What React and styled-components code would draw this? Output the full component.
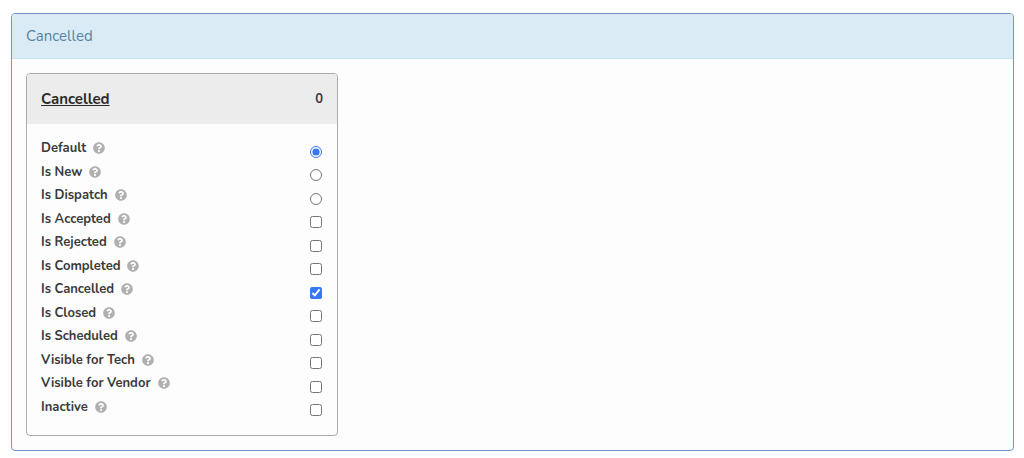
import React, { useState } from 'react';
import styled, { createGlobalStyle } from 'styled-components';
import { FaQuestionCircle } from 'react-icons/fa';

const GlobalStyle = createGlobalStyle`
  * {
    box-sizing: border-box;
  }

  body {
    margin: 0;
    background: #fff;
    color: #3a3a3a;
    font-family: Nunito, Lato, sans-serif;
    font-size: 13px;
  }
`;

const Page = styled.main`
  padding: 13px 10px 8px 11px;
`;

const Panel = styled.section`
  border: 1px solid #7595c4;
  border-radius: 4px;
  background: #fdfdfd;
  overflow: hidden;
`;

const PanelHeading = styled.h1`
  margin: 0;
  padding: 10px 14px;
  border-bottom: 1px solid #c3e7f0;
  background: #daebf5;
  color: #5683a1;
  font-size: 15px;
  font-weight: 400;
  line-height: 24px;
`;

const PanelBody = styled.div`
  display: flex;
  flex-wrap: wrap;
  gap: 16px;
  padding: 14px;
`;

const Card = styled.article`
  width: 312px;
  max-width: 100%;
  border: 1px solid #aaa;
  border-radius: 4px;
  background: #fdfdfd;
  overflow: hidden;
`;

const CardHeader = styled.header`
  display: flex;
  align-items: center;
  justify-content: space-between;
  padding: 0 14px;
  background: #ececec;
  line-height: 50px;
`;

const StatusLink = styled.a`
  color: #2b2b2b;
  font-size: 15px;
  font-weight: 700;
`;

const Count = styled.span`
  font-weight: 700;
`;

const Options = styled.ul`
  list-style: none;
  margin: 0;
  padding: 10px 15px 19px 14px;
`;

const Option = styled.li`
  display: flex;
  align-items: flex-end;
  justify-content: space-between;
  height: 23px;

  &:nth-child(odd) {
    height: 24px;
  }
`;

const OptionName = styled.div`
  display: flex;
  align-self: flex-start;
  align-items: center;
  gap: 7px;
  padding-top: 2px;
  line-height: 24px;
`;

const OptionLabel = styled.label`
  font-weight: 700;
`;

const HelpIcon = styled(FaQuestionCircle)`
  width: 12px;
  height: 12px;
  color: #b0b0b0;
`;

const Control = styled.input`
  width: 12px;
  height: 12px;
  margin: 0;
  accent-color: #3478f6;
`;

const options = [
  { id: 'default', label: 'Default', type: 'radio' },
  { id: 'is-new', label: 'Is New', type: 'radio' },
  { id: 'is-dispatch', label: 'Is Dispatch', type: 'radio' },
  { id: 'is-accepted', label: 'Is Accepted', type: 'checkbox' },
  { id: 'is-rejected', label: 'Is Rejected', type: 'checkbox' },
  { id: 'is-completed', label: 'Is Completed', type: 'checkbox' },
  { id: 'is-cancelled', label: 'Is Cancelled', type: 'checkbox' },
  { id: 'is-closed', label: 'Is Closed', type: 'checkbox' },
  { id: 'is-scheduled', label: 'Is Scheduled', type: 'checkbox' },
  { id: 'visible-tech', label: 'Visible for Tech', type: 'checkbox' },
  { id: 'visible-vendor', label: 'Visible for Vendor', type: 'checkbox' },
  { id: 'inactive', label: 'Inactive', type: 'checkbox' },
];

const App = () => {
  const [role, setRole] = useState('default');
  const [flags, setFlags] = useState({ 'is-cancelled': true });

  const handleChange = option => {
    if (option.type === 'radio') {
      setRole(option.id);
    } else {
      setFlags({ ...flags, [option.id]: !flags[option.id] });
    }
  };

  return (
    <Page>
      <GlobalStyle />
      <Panel>
        <PanelHeading>Cancelled</PanelHeading>
        <PanelBody>
          <Card>
            <CardHeader>
              <StatusLink href="#cancelled">Cancelled</StatusLink>
              <Count>0</Count>
            </CardHeader>
            <Options>
              {options.map(option => (
                <Option key={option.id}>
                  <OptionName>
                    <OptionLabel htmlFor={option.id}>{option.label}</OptionLabel>
                    <HelpIcon />
                  </OptionName>
                  <Control
                    id={option.id}
                    type={option.type}
                    name={option.type === 'radio' ? 'role' : option.id}
                    checked={option.type === 'radio' ? role === option.id : !!flags[option.id]}
                    onChange={() => handleChange(option)}
                  />
                </Option>
              ))}
            </Options>
          </Card>
        </PanelBody>
      </Panel>
    </Page>
  );
};

export default App;
